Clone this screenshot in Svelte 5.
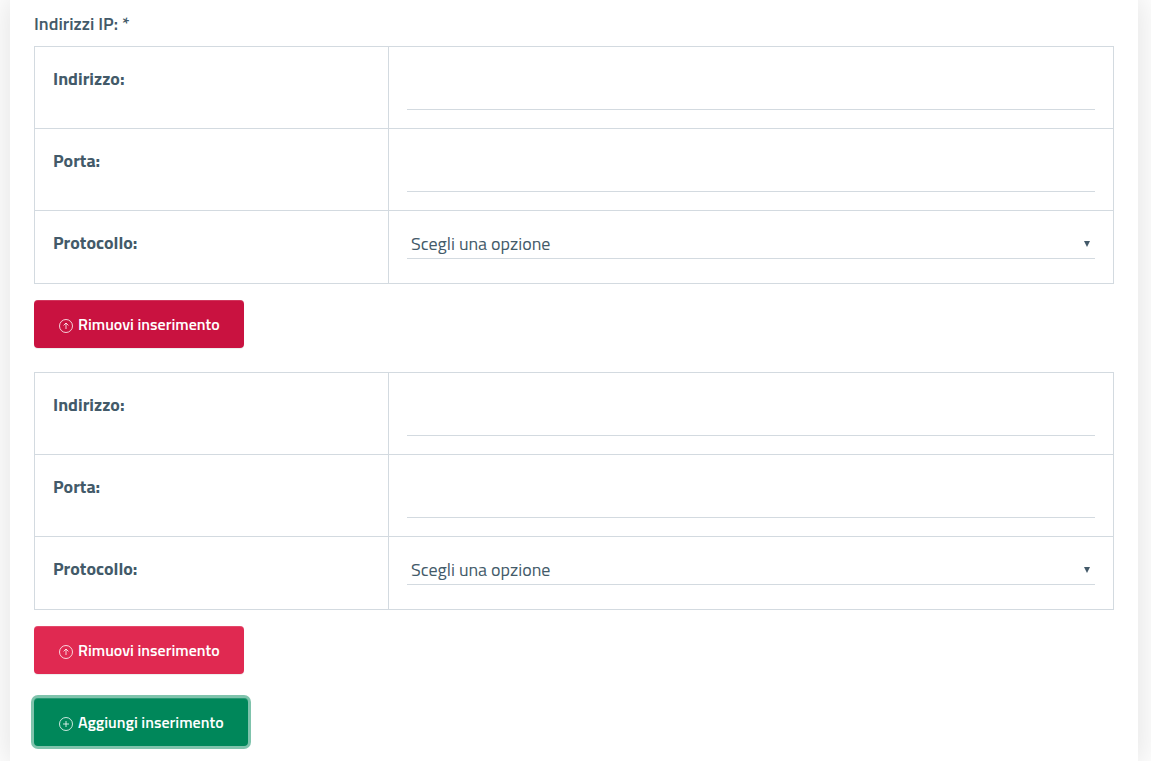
<script>
  let entries = $state([
    { id: 1, address: '', port: '', protocol: '' },
    { id: 2, address: '', port: '', protocol: '' },
  ])
  let nextId = 3

  const protocols = ['TCP', 'UDP']

  function addEntry() {
    entries.push({ id: nextId++, address: '', port: '', protocol: '' })
  }

  function removeEntry(id) {
    entries = entries.filter((e) => e.id !== id)
  }
</script>

<main class="page">
  <form class="card" onsubmit={(e) => e.preventDefault()}>
    <fieldset>
      <legend>Indirizzi IP: *</legend>

      {#each entries as entry, i (entry.id)}
        <div class="entry">
          <table>
            <tbody>
              <tr>
                <th scope="row"><label for="address-{entry.id}">Indirizzo:</label></th>
                <td><input id="address-{entry.id}" type="text" bind:value={entry.address} /></td>
              </tr>
              <tr>
                <th scope="row"><label for="port-{entry.id}">Porta:</label></th>
                <td><input id="port-{entry.id}" type="text" bind:value={entry.port} /></td>
              </tr>
              <tr>
                <th scope="row"><label for="protocol-{entry.id}">Protocollo:</label></th>
                <td class="select-cell">
                  <div class="select">
                    <select id="protocol-{entry.id}" bind:value={entry.protocol}>
                      <option value="">Scegli una opzione</option>
                      {#each protocols as protocol}
                        <option value={protocol}>{protocol}</option>
                      {/each}
                    </select>
                    <svg class="caret" viewBox="0 0 6 6" aria-hidden="true"><path d="M0 0h6L3 6z" /></svg>
                  </div>
                </td>
              </tr>
            </tbody>
          </table>
          <button type="button" class="btn remove" class:active={i === 0} onclick={() => removeEntry(entry.id)}>
            <svg class="icon" viewBox="0 0 16 16" aria-hidden="true">
              <circle cx="8" cy="8" r="6.5" />
              <path d="M8 11V5M5.6 7.4L8 5l2.4 2.4" />
            </svg>
            <span>Rimuovi inserimento</span>
          </button>
        </div>
      {/each}

      <button type="button" class="btn add" onclick={addEntry}>
        <svg class="icon" viewBox="0 0 16 16" aria-hidden="true">
          <circle cx="8" cy="8" r="6.5" />
          <path d="M8 5v6M5 8h6" />
        </svg>
        <span>Aggiungi inserimento</span>
      </button>
    </fieldset>
  </form>
</main>

<style>
  :global(body) { margin: 0; background: #fff; }
  .page {
    box-sizing: border-box;
    min-height: 100vh;
    display: flex;
    padding: 0 13px 0 10px;
    overflow: hidden;
    color: #435a69;
    font-family: 'Titillium Web', 'Noto Sans', sans-serif;
    font-size: 18px;
    line-height: 27px;
  }
  .card {
    box-sizing: border-box;
    flex: 1;
    min-width: 0;
    padding: 10px 24px 15px;
    background: #fff;
    box-shadow: 0 0 30px 5px rgba(0, 0, 0, 0.1);
  }
  fieldset { min-width: 0; margin: 0; padding: 0; border: 0; }
  legend { padding: 0 0 9px; font-weight: 600; }
  .entry { margin-bottom: 24px; }
  table { width: 100%; margin-bottom: 16px; border-collapse: collapse; table-layout: fixed; }
  th, td { padding: 18px; border: 1px solid #d3dae0; vertical-align: top; }
  th { width: 317px; font-weight: 700; text-align: left; }
  input, select {
    box-sizing: border-box;
    display: block;
    width: 100%;
    border: 0;
    border-bottom: 1px solid #d3dae0;
    border-radius: 0;
    outline: 0;
    background: transparent;
    color: #435a69;
    font: inherit;
  }
  input { height: 45px; padding: 0 8px; }
  .select-cell { padding-bottom: 24px; }
  .select { position: relative; }
  select { height: 30px; padding: 0 24px 0 4px; appearance: none; }
  .caret { position: absolute; top: 12px; right: 5px; width: 6px; height: 6px; fill: #435a69; pointer-events: none; }
  .btn {
    display: flex;
    align-items: center;
    gap: 4px;
    height: 48px;
    padding: 0 24px;
    border: 0;
    border-radius: 4px;
    color: #fff;
    font-family: inherit;
    font-size: 16px;
    font-weight: 600;
    box-shadow: inset 0 1px 0 rgba(255, 255, 255, 0.15), 0 1px 1px rgba(0, 0, 0, 0.075);
    cursor: pointer;
  }
  .remove { background: #e02951; }
  .remove:hover, .remove.active { background: #c91240; }
  .add {
    background: #00875a;
    box-shadow: inset 0 1px 0 rgba(255, 255, 255, 0.15), 0 0 0 3px #7fc3ac;
  }
  .icon { width: 16px; height: 16px; margin-top: 3px; fill: none; stroke: #fff; stroke-width: 0.8; }
</style>
